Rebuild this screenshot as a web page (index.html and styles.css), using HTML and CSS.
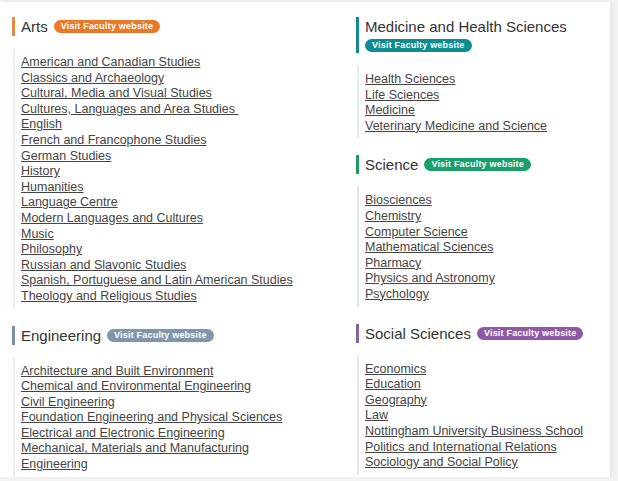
FILE: index.html
```html
<!DOCTYPE html>
<html>
	<head>
		<meta charset="utf-8">
		<title>Faculties</title>
		<link rel="stylesheet" href="styles.css">
	</head>
	<body>
		<div class="card">
			<div class="col">
				<div class="faculty arts">
					<div class="head">
						<h2>Arts</h2>
						<a class="badge" href="#">Visit Faculty website</a>
					</div>
					<ul class="courses">
						<li><a href="#">American and Canadian Studies</a></li>
						<li><a href="#">Classics and Archaeology</a></li>
						<li><a href="#">Cultural, Media and Visual Studies</a></li>
						<li><a href="#">Cultures, Languages and Area Studies&nbsp;</a></li>
						<li><a href="#">English</a></li>
						<li><a href="#">French and Francophone Studies</a></li>
						<li><a href="#">German Studies</a></li>
						<li><a href="#">History</a></li>
						<li><a href="#">Humanities</a></li>
						<li><a href="#">Language Centre</a></li>
						<li><a href="#">Modern Languages and Cultures</a></li>
						<li><a href="#">Music</a></li>
						<li><a href="#">Philosophy</a></li>
						<li><a href="#">Russian and Slavonic Studies</a></li>
						<li><a href="#">Spanish, Portuguese and Latin American Studies</a></li>
						<li><a href="#">Theology and Religious Studies</a></li>
					</ul>
				</div>
				<div class="faculty eng">
					<div class="head">
						<h2>Engineering</h2>
						<a class="badge" href="#">Visit Faculty website</a>
					</div>
					<ul class="courses">
						<li><a href="#">Architecture and Built Environment</a></li>
						<li><a href="#">Chemical and Environmental Engineering</a></li>
						<li><a href="#">Civil Engineering</a></li>
						<li><a href="#">Foundation Engineering and Physical Sciences</a></li>
						<li><a href="#">Electrical and Electronic Engineering</a></li>
						<li><a href="#">Mechanical, Materials and Manufacturing Engineering</a></li>
					</ul>
				</div>
			</div>
			<div class="col">
				<div class="faculty med">
					<div class="head stacked">
						<h2>Medicine and Health Sciences</h2>
						<a class="badge" href="#">Visit Faculty website</a>
					</div>
					<ul class="courses">
						<li><a href="#">Health Sciences</a></li>
						<li><a href="#">Life Sciences</a></li>
						<li><a href="#">Medicine</a></li>
						<li><a href="#">Veterinary Medicine and Science</a></li>
					</ul>
				</div>
				<div class="faculty sci">
					<div class="head">
						<h2>Science</h2>
						<a class="badge" href="#">Visit Faculty website</a>
					</div>
					<ul class="courses">
						<li><a href="#">Biosciences</a></li>
						<li><a href="#">Chemistry</a></li>
						<li><a href="#">Computer Science</a></li>
						<li><a href="#">Mathematical Sciences</a></li>
						<li><a href="#">Pharmacy</a></li>
						<li><a href="#">Physics and Astronomy</a></li>
						<li><a href="#">Psychology</a></li>
					</ul>
				</div>
				<div class="faculty soc">
					<div class="head">
						<h2>Social Sciences</h2>
						<a class="badge" href="#">Visit Faculty website</a>
					</div>
					<ul class="courses">
						<li><a href="#">Economics</a></li>
						<li><a href="#">Education</a></li>
						<li><a href="#">Geography</a></li>
						<li><a href="#">Law</a></li>
						<li><a href="#">Nottingham University Business School</a></li>
						<li><a href="#">Politics and International Relations</a></li>
						<li><a href="#">Sociology and Social Policy</a></li>
					</ul>
				</div>
			</div>
		</div>
	</body>
</html>
```

FILE: styles.css
```css
html,body,ul,li,h2{margin: 0; padding: 0;}
ul,li{list-style: none;}
body{
	background: #f2f2f2;
	font-family: "Liberation Sans", Arial, sans-serif;
	color: #333;
	overflow: hidden;
}
.card{
	width: 610px;
	margin-top: 2px;
	padding: 15px 0 0 12px;
	box-sizing: border-box;
	background: #fff;
	box-shadow: 2px 0 5px rgba(0,0,0,.06);
	display: grid;
	grid-template-columns: 300px 1fr;
	column-gap: 44px;
}
.faculty{
	margin-bottom: 17px;
}
.faculty:last-child{
	margin-bottom: 0;
}
.head{
	border-left: 3px solid #ccc;
	padding-left: 6px;
	display: flex;
	align-items: center;
	height: 19px;
}
.head h2{
	font-size: 15px;
	font-weight: normal;
	line-height: 19px;
	color: #333;
}
.badge{
	display: inline-block;
	margin-left: 6px;
	padding: 0 7px;
	height: 13px;
	line-height: 13px;
	border-radius: 7px;
	font-size: 9px;
	font-weight: bold;
	color: #fff;
	text-decoration: none;
	letter-spacing: .2px;
}
.head.stacked{
	flex-direction: column;
	align-items: flex-start;
	height: auto;
	padding-bottom: 1px;
}
.head.stacked .badge{
	margin: 3px 0 0;
}
.courses{
	margin-top: 12px;
	padding: 7px 0 4px 6px;
	border-left: 2px solid #eee;
	margin-left: 1px;
}
.courses li{
	font-size: 12.5px;
	line-height: 15.6px;
}
.courses a{
	color: #444;
	text-decoration: underline;
}
.arts .head{border-color: #e8873e;}
.arts .badge{background: #ea7a26;}
.arts .courses{border-color: #f8ece6;}
.eng .head{border-color: #7a8fa5;}
.eng .badge{background: #7f95aa;}
.eng .courses{border-color: #eceef1;}
.med .head{border-color: #138a90;}
.med .badge{background: #0e8c92;}
.med .courses{border-color: #e2eeee;}
.sci .head{border-color: #1c9a64;}
.sci .badge{background: #19a06a;}
.sci .courses{border-color: #dcece4;}
.soc .head{border-color: #8a619e;}
.soc .badge{background: #8e5aa6;}
.soc .courses{border-color: #ece5ef;}
```
